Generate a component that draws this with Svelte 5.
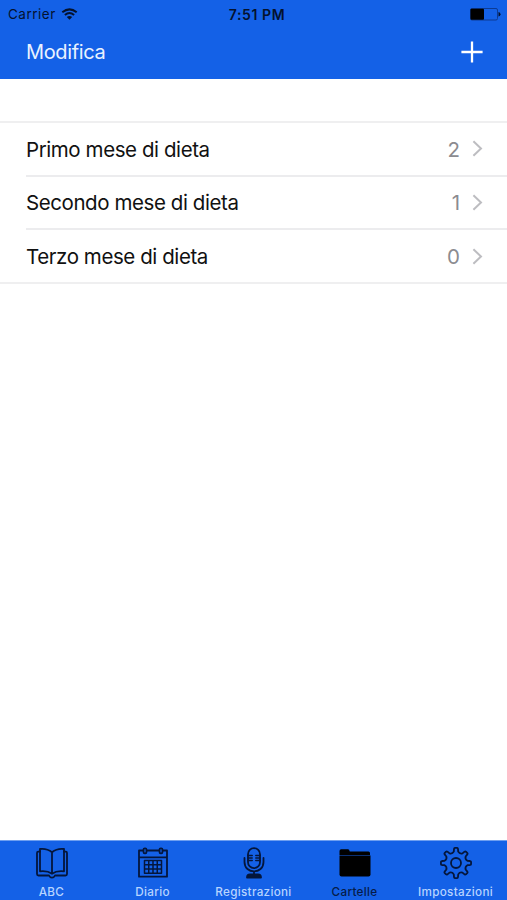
<script>
  const folders = [
    { name: 'Primo mese di dieta', count: 2 },
    { name: 'Secondo mese di dieta', count: 1 },
    { name: 'Terzo mese di dieta', count: 0 }
  ];
  const tabs = [
    { id: 'book', label: 'ABC' },
    { id: 'calendar', label: 'Diario' },
    { id: 'mic', label: 'Registrazioni' },
    { id: 'folder', label: 'Cartelle', active: true },
    { id: 'gear', label: 'Impostazioni' }
  ];

  // Eight-toothed gear outline centred on 17,17
  function gearPath() {
    const pt = (r, deg) => {
      const a = (deg * Math.PI) / 180;
      return `${(17 + r * Math.cos(a)).toFixed(2)} ${(17 + r * Math.sin(a)).toFixed(2)}`;
    };
    let d = '';
    for (let i = 0; i < 8; i++) {
      const c = i * 45 - 90;
      d += `${i ? 'L' : 'M'}${pt(11.6, c - 11)}L${pt(14.2, c - 8)}Q${pt(15.1, c - 7)} ${pt(15.1, c - 4)}`;
      d += `L${pt(15.1, c + 4)}Q${pt(15.1, c + 7)} ${pt(14.2, c + 8)}L${pt(11.6, c + 11)}`;
      d += `Q${pt(9.6, c + 22.5)} ${pt(11.6, c + 34)}`;
    }
    return d + 'Z';
  }
  const gear = gearPath();
</script>

<div class="screen">
  <header>
    <div class="status">
      <div class="carrier">
        <span>Carrier</span>
        <svg width="17" height="12" viewBox="0 0 17 12" fill="none" stroke="#04122e" stroke-width="2">
          <path d="M1.3 4.3Q8.5 -1.6 15.7 4.3M3.9 7Q8.5 3.1 13.1 7" />
          <path d="M5.8 9Q8.5 6.8 11.2 9L8.5 11.7Z" fill="#04122e" stroke="none" />
        </svg>
      </div>
      <div class="time">7:51 PM</div>
      <svg class="battery" width="31" height="13" viewBox="0 0 31 13">
        <rect x=".5" y=".5" width="27" height="11.5" rx="1.5" fill="none" stroke="#0c3b94" />
        <rect x=".5" y=".8" width="13.5" height="11" rx="1" fill="#000" />
        <path d="M28.5 4Q30.5 4.5 30.5 6.3T28.5 8.6Z" fill="#04122e" />
      </svg>
    </div>
    <div class="nav">
      <span>Modifica</span>
      <svg width="22" height="22" viewBox="0 0 22 22" stroke="#fff" stroke-width="2.3"><path d="M11 .4V21.6M.4 11H21.6" /></svg>
    </div>
  </header>

  <main>
    <ul>
      {#each folders as folder}
        <li>
          <span class="name">{folder.name}</span>
          <span class="count">{folder.count}</span>
          <svg width="11" height="17" viewBox="0 0 11 17" fill="none" stroke="#bdbdc1" stroke-width="2"><path d="M1.4 1.2L9 8.5L1.4 15.8" /></svg>
        </li>
      {/each}
    </ul>
  </main>

  <footer>
    {#each tabs as tab}
      <div class="tab" class:active={tab.active}>
        <svg width="34" height="34" viewBox="0 0 34 34" fill="none" stroke="#04163c" stroke-width="1.8" stroke-linejoin="round" stroke-linecap="round">
          {#if tab.id === 'book'}
            <path d="M17 6.2Q12 2.2 5 3V25.3Q12.5 24.5 17 27.7Q21.5 24.5 29 25.3V3Q22 2.2 17 6.2V27.7" />
            <path d="M5 5.7H3.2Q2 5.7 2 7V28Q2 29.5 3.5 29.5H14Q15 31.7 17 31.7T20 29.5H30.5Q32 29.5 32 28V7Q32 5.7 30.8 5.7H29" />
          {:else if tab.id === 'calendar'}
            <path d="M6.5 4.5H3V30.7H31V4.5H27.5M11.5 4.5H22.5M3 11.3H31" />
            <rect x="7.5" y="2.3" width="3" height="5" rx="1.3" /><rect x="23.5" y="2.3" width="3" height="5" rx="1.3" />
            <path stroke-width="1.5" d="M8.5 14.6H25.5V27.2H8.5ZM8.5 18.8H25.5M8.5 23H25.5M12.75 14.6V27.2M17 14.6V27.2M21.25 14.6V27.2" />
          {:else if tab.id === 'mic'}
            <rect x="11" y="2.2" width="12" height="20" rx="6" />
            <path d="M7.5 12V16C7.5 28.5 26.5 28.5 26.5 16V12M17 25.5V30" />
            <path stroke-width="1.5" d="M11 9.5H15.2M11 12H15.2M11 14.5H15.2M18.8 9.5H23M18.8 12H23M18.8 14.5H23" />
            <path d="M10 31.5Q10 28.5 13 28.5H21Q24 28.5 24 31.5Z" fill="#04163c" />
          {:else if tab.id === 'folder'}
            <path d="M1.5 9V5Q1.5 3.3 3.2 3.3H10Q11.2 3.3 11.8 5.5H30.5Q32 5.5 32 7V9Z" fill="#000" stroke="none" />
            <path d="M1.5 9.5H32.5V28.5Q32.5 30.5 30.5 30.5H3.5Q1.5 30.5 1.5 28.5Z" fill="#000" stroke="none" />
          {:else}
            <path d={gear} /><circle cx="17" cy="17" r="5" />
          {/if}
        </svg>
        <span>{tab.label}</span>
      </div>
    {/each}
  </footer>
</div>

<style>
  .screen {
    width: 507px;
    height: 900px;
    display: flex;
    flex-direction: column;
    background: #fff;
    font-family: Inter, 'Liberation Sans', sans-serif;
    overflow: hidden;
  }
  svg { display: block; flex: none; }
  header { height: 79px; background: #1461e7; }
  .status {
    height: 27px;
    display: grid;
    grid-template-columns: 1fr auto 1fr;
    align-items: center;
    padding: 0 6px 0 8px;
    box-sizing: border-box;
    font-size: 13.5px;
    line-height: 27px;
    color: #04122e;
  }
  .carrier { display: flex; align-items: center; gap: 5px; letter-spacing: 0.5px; }
  .carrier span { padding-top: 1px; }
  .time { font-weight: 600; font-size: 14px; letter-spacing: 0.6px; padding-left: 5px; }
  .battery { justify-self: end; }
  .nav {
    height: 50px;
    display: flex;
    align-items: center;
    justify-content: space-between;
    padding: 0 24px 0 26px;
    color: #e9f2ff;
    font-size: 20px;
    letter-spacing: -0.35px;
  }
  main { flex: 1; padding-top: 42px; }
  ul { list-style: none; margin: 0; padding: 0; border-top: 2px solid #efeff0; border-bottom: 2px solid #efeff0; }
  li {
    height: 53.5px;
    box-sizing: border-box;
    display: flex;
    align-items: center;
    margin-left: 26px;
    padding-right: 24px;
    border-bottom: 2px solid #ececee;
    font-size: 20.5px;
    color: #111;
  }
  li:last-child { border-bottom: 0; height: 52px; }
  .name { flex: 1; white-space: nowrap; letter-spacing: -0.42px; padding-top: 1px; }
  .count { color: #8b8b90; margin-right: 12px; padding-top: 1px; }
  footer {
    height: 60px;
    display: flex;
    background: #1461e7;
    border-top: 1px solid #6e9ff0;
    box-sizing: border-box;
    padding: 5px 0 0 1px;
  }
  .tab {
    width: 101px;
    flex: none;
    display: flex;
    flex-direction: column;
    align-items: center;
    font-size: 11.7px;
    line-height: 14px;
    font-weight: 500;
    letter-spacing: 0.3px;
    color: #b7d4ff;
  }
  .tab span { margin-top: 5px; white-space: nowrap; }
  .active { color: #061c49; }
</style>
